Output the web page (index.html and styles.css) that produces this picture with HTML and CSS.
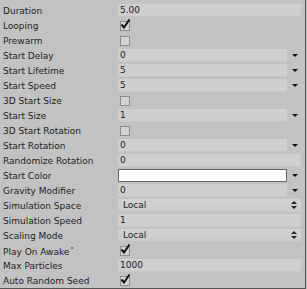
FILE: index.html
```html
<!DOCTYPE html>
<html lang="en">
<head>
  <meta charset="UTF-8" />
  <title>Particle System</title>
  <link rel="stylesheet" href="styles.css">
</head>
<body>
  <div class="inspector">
    <div class="row"><span class="label">Duration</span><span class="field">5.00</span></div>
    <div class="row"><span class="label">Looping</span><span class="check on"><svg viewBox="0 0 11 10"><path d="M1.5 5.5 L4 8.5 L9.5 0.5" /></svg></span></div>
    <div class="row"><span class="label">Prewarm</span><span class="check"></span></div>
    <div class="row curve"><span class="label">Start Delay</span><span class="field">0</span><span class="arrow"></span></div>
    <div class="row curve"><span class="label">Start Lifetime</span><span class="field">5</span><span class="arrow"></span></div>
    <div class="row curve"><span class="label">Start Speed</span><span class="field">5</span><span class="arrow"></span></div>
    <div class="row"><span class="label">3D Start Size</span><span class="check"></span></div>
    <div class="row curve"><span class="label">Start Size</span><span class="field">1</span><span class="arrow"></span></div>
    <div class="row"><span class="label">3D Start Rotation</span><span class="check"></span></div>
    <div class="row curve"><span class="label">Start Rotation</span><span class="field">0</span><span class="arrow"></span></div>
    <div class="row"><span class="label">Randomize Rotation</span><span class="field">0</span></div>
    <div class="row curve"><span class="label">Start Color</span><span class="field color"></span><span class="arrow"></span></div>
    <div class="row curve"><span class="label">Gravity Modifier</span><span class="field">0</span><span class="arrow"></span></div>
    <div class="row"><span class="label">Simulation Space</span><span class="field popup">Local<span class="updown"></span></span></div>
    <div class="row"><span class="label">Simulation Speed</span><span class="field">1</span></div>
    <div class="row"><span class="label">Scaling Mode</span><span class="field popup">Local<span class="updown"></span></span></div>
    <div class="row"><span class="label">Play On Awake<sup>*</sup></span><span class="check on"><svg viewBox="0 0 11 10"><path d="M1.5 5.5 L4 8.5 L9.5 0.5" /></svg></span></div>
    <div class="row"><span class="label">Max Particles</span><span class="field">1000</span></div>
    <div class="row"><span class="label">Auto Random Seed</span><span class="check on"><svg viewBox="0 0 11 10"><path d="M1.5 5.5 L4 8.5 L9.5 0.5" /></svg></span></div>
  </div>
</body>
</html>
```

FILE: styles.css
```css
body{margin:0;background:#c2c2c2;font-family:"DejaVu Sans",sans-serif;font-size:9px;color:#222}
.inspector{width:306px;height:289px;box-sizing:border-box;padding-top:3px;border-right:1px solid #555;border-bottom:1px solid #555}
.row{display:flex;align-items:center;height:15px}
.label{width:115px;padding-left:3px;white-space:nowrap}
.label sup{font-size:6px;vertical-align:4px;margin-left:1px}
.field{flex:1;height:13px;line-height:13px;padding-left:2px;margin-right:4px;background:#cfcfcf;border-bottom:1px solid #c6c6c6;box-sizing:border-box;position:relative}
.curve .field{margin-right:0}
.arrow{width:14px;height:13px;margin-right:4px;position:relative}
.arrow::after{content:"";position:absolute;left:5px;top:5px;border-left:3px solid transparent;border-right:3px solid transparent;border-top:3px solid #111}
.field.color{background:#fff;border:1px solid #666}
.field.popup{padding-left:5px;background:linear-gradient(#d3d3d3,#cbcbcb)}
.updown{position:absolute;right:4px;top:2px;width:6px;height:9px}
.updown::before{content:"";position:absolute;left:0;top:0;border-left:3px solid transparent;border-right:3px solid transparent;border-bottom:3px solid #222}
.updown::after{content:"";position:absolute;left:0;bottom:1px;border-left:3px solid transparent;border-right:3px solid transparent;border-top:3px solid #222}
.check{width:8px;height:8px;margin-left:2px;border:1px solid #8c8c8c;background:#d4d4d4;position:relative}
.check svg{position:absolute;left:-1px;top:-3px;width:11px;height:10px}
.check svg path{fill:none;stroke:#111;stroke-width:2}
```
